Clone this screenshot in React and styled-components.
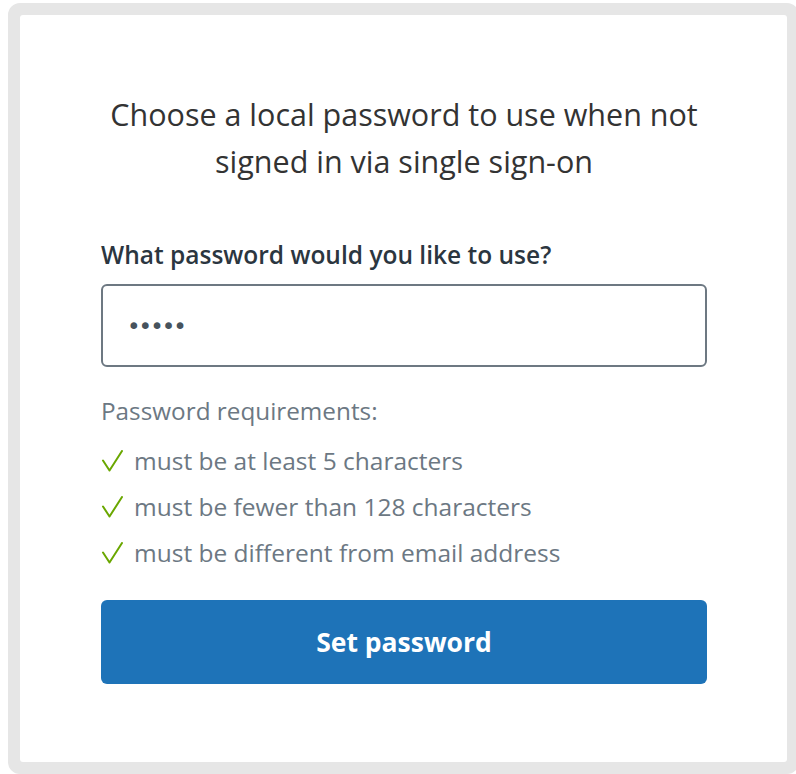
import React from "react";
import styled, { createGlobalStyle } from "styled-components";

const Global = createGlobalStyle`
  html, body { margin: 0; padding: 0; background: #ffffff; overflow: hidden; }
  body { font-family: "Open Sans", "Noto Sans", sans-serif; }
  * { box-sizing: border-box; }
`;

const Frame = styled.div`
  margin: 3px 0 0 8px;
  width: 791px;
  border: 12px solid #e6e6e6;
  border-radius: 12px;
  background: #e6e6e6;
`;

const Card = styled.div`
  background: #ffffff;
  border-radius: 3px;
  height: 747px;
  padding: 76px 80px 0 81px;
  display: flex;
  flex-direction: column;
`;

const Title = styled.h1`
  margin: 0;
  font-size: 30.5px;
  font-weight: 400;
  line-height: 47px;
  color: #333333;
  text-align: center;
  white-space: nowrap;
`;

const Label = styled.label`
  margin-top: 55px;
  font-size: 24.5px;
  font-weight: 600;
  line-height: 30px;
  color: #2b3640;
  white-space: nowrap;
`;

const Input = styled.input`
  margin-top: 14px;
  width: 100%;
  height: 83px;
  border: 2px solid #6d7882;
  border-radius: 6px;
  padding: 0 24px;
  font-family: "DejaVu Sans", sans-serif;
  font-size: 23px;
  color: #47535d;
  letter-spacing: -2px;
  outline: none;
  background: #fff;
`;

const ReqTitle = styled.div`
  margin-top: 21px;
  font-size: 24.3px;
  line-height: 46px;
  color: #6c7883;
`;

const ReqList = styled.ul`
  list-style: none;
  margin: 4px 0 0;
  padding: 0;
`;

const ReqItem = styled.li`
  display: flex;
  align-items: center;
  gap: 11px;
  font-size: 24.5px;
  line-height: 46px;
  color: #6c7883;
  white-space: nowrap;
`;

const Check = styled.svg`
  width: 22px;
  height: 22px;
  flex: none;
`;

const Button = styled.button`
  margin-top: 24px;
  width: 100%;
  height: 84px;
  flex: none;
  border: none;
  border-radius: 6px;
  background: #1e73b8;
  color: #ffffff;
  font-family: "Open Sans", sans-serif;
  font-size: 26.5px;
  font-weight: 700;
  cursor: pointer;
`;

const CheckIcon = () => (
  <Check viewBox="0 0 22 22" aria-hidden="true">
    <path d="M2 10.5 L8.5 20.5 L21 1" fill="none" stroke="#6aa700" strokeWidth="2" strokeLinecap="round" strokeLinejoin="round" />
  </Check>
);

const requirements = [
  "must be at least 5 characters",
  "must be fewer than 128 characters",
  "must be different from email address",
];

export default function App() {
  return (
    <>
      <Global />
      <Frame>
        <Card>
          <Title>
            Choose a local password to use when not
            <br />
            signed in via single sign-on
          </Title>
          <Label htmlFor="pw">What password would you like to use?</Label>
          <Input id="pw" type="password" defaultValue="12345" readOnly />
          <ReqTitle>Password requirements:</ReqTitle>
          <ReqList>
            {requirements.map((r) => (
              <ReqItem key={r}>
                <CheckIcon />
                {r}
              </ReqItem>
            ))}
          </ReqList>
          <Button type="button">Set password</Button>
        </Card>
      </Frame>
    </>
  );
}
